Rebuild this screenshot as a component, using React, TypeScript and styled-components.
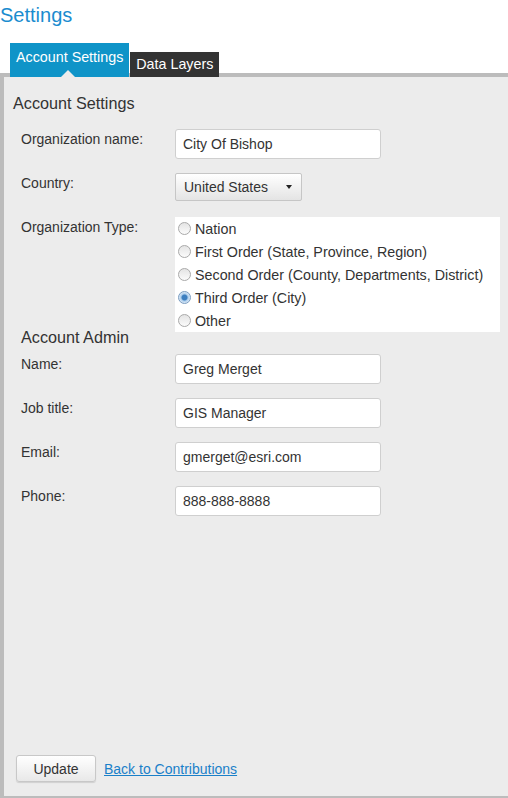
import React, { FC, useState } from "react";
import styled, { createGlobalStyle } from "styled-components";

const GlobalStyle = createGlobalStyle`
  html, body {
    margin: 0;
    padding: 0;
    background: #fff;
    font-family: "Liberation Sans", Arial, sans-serif;
    color: #333;
  }
`;

const Page = styled.div`
  width: 508px;
  height: 798px;
  display: flex;
  flex-direction: column;
  overflow: hidden;
`;

const Title = styled.h1`
  margin: 0;
  padding: 3px 0 0 0;
  height: 43px;
  box-sizing: border-box;
  font-size: 20px;
  line-height: 24px;
  font-weight: 400;
  color: #1b8ccf;
`;

const TabBar = styled.div`
  height: 34px;
  display: flex;
  align-items: flex-end;
  padding-left: 10px;
  box-shadow: inset 0 -4px 0 #bcbcbc;
`;

const Tab = styled.div<{ active?: boolean }>`
  position: relative;
  height: ${(p) => (p.active ? "34px" : "25px")};
  padding: ${(p) => (p.active ? "6px 6px 0 6px" : "4px 6px 0 6px")};
  box-sizing: border-box;
  margin-right: 1px;
  background: ${(p) => (p.active ? "#0f94c8" : "#333")};
  color: #fff;
  font-size: 14.3px;
  line-height: 16px;
  white-space: nowrap;
  &::after {
    content: "";
    display: ${(p) => (p.active ? "block" : "none")};
    position: absolute;
    left: 51px;
    bottom: 0;
    border-left: 7px solid transparent;
    border-right: 7px solid transparent;
    border-bottom: 7px solid #ececec;
  }
`;

const Panel = styled.div`
  flex: 1;
  display: flex;
  flex-direction: column;
  background: #ececec;
  border-left: 4px solid #bcbcbc;
  border-bottom: 2px solid #bcbcbc;
  padding: 16px 0 14px 0;
`;

const SectionTitle = styled.h2<{ indent?: number; pull?: number }>`
  margin: ${(p) => (p.pull ? `-${p.pull}px` : "0")} 0 0 ${(p) => p.indent ?? 9}px;
  font-size: 16.2px;
  line-height: 20px;
  font-weight: 400;
  color: #333;
`;

const Form = styled.div<{ top: number }>`
  display: flex;
  flex-direction: column;
  gap: 14px;
  margin-top: ${(p) => p.top}px;
  padding-left: 17px;
`;

const Row = styled.div<{ top?: number }>`
  display: grid;
  grid-template-columns: 154px 1fr;
  align-items: start;
  margin-top: ${(p) => p.top ?? 0}px;
`;

const Label = styled.label`
  padding-top: 2px;
  font-size: 14px;
  line-height: 16px;
  color: #333;
`;

const TextInput = styled.input`
  width: 206px;
  height: 30px;
  box-sizing: border-box;
  border: 1px solid #cfcfcf;
  border-radius: 3px;
  background: #fff;
  padding: 0 7px;
  font-family: "Liberation Sans", Arial, sans-serif;
  font-size: 14px;
  color: #333;
  outline: none;
`;

const Select = styled.div`
  width: 127px;
  height: 28px;
  box-sizing: border-box;
  display: flex;
  align-items: center;
  justify-content: space-between;
  padding: 0 9px 0 8px;
  border: 1px solid #c6c6c6;
  border-radius: 2px;
  background: linear-gradient(#ffffff, #e4e4e4);
  font-size: 14px;
  color: #333;
`;

const Caret = styled.span`
  width: 0;
  height: 0;
  border-left: 3.5px solid transparent;
  border-right: 3.5px solid transparent;
  border-top: 4px solid #222;
`;

const RadioBox = styled.div`
  width: 325px;
  background: #fff;
  padding: 0 0 0 3px;
  box-sizing: border-box;
`;

const RadioItem = styled.label`
  display: flex;
  align-items: center;
  gap: 4px;
  height: 23px;
  font-size: 14.3px;
  color: #333;
  cursor: pointer;
  white-space: nowrap;
`;

const RadioDot = styled.span<{ checked?: boolean }>`
  width: 13px;
  height: 13px;
  flex-shrink: 0;
  box-sizing: border-box;
  border-radius: 50%;
  border: 1px solid ${(p) => (p.checked ? "#7a9cc0" : "#a9a9a9")};
  background: ${(p) =>
    p.checked
      ? "radial-gradient(circle, #3d7fc0 0 2.5px, #a9cbeb 3.5px, #e6f0fa 6px)"
      : "linear-gradient(#e4e4e4, #fbfbfb)"};
`;

const Footer = styled.div`
  margin-top: auto;
  display: flex;
  align-items: center;
  gap: 8px;
  padding-left: 12px;
`;

const Button = styled.button`
  width: 80px;
  height: 27px;
  border: 1px solid #c8c8c8;
  border-radius: 3px;
  background: linear-gradient(#ffffff, #e8e8e8);
  box-shadow: 0 1px 1px rgba(0, 0, 0, 0.12);
  font-family: "Liberation Sans", Arial, sans-serif;
  font-size: 14px;
  color: #333;
`;

const Link = styled.a`
  font-size: 14px;
  color: #1a80c9;
  text-decoration: underline;
  cursor: pointer;
`;

const orgTypes = [
  "Nation",
  "First Order (State, Province, Region)",
  "Second Order (County, Departments, District)",
  "Third Order (City)",
  "Other",
];

const admin = [
  { label: "Name:", value: "Greg Merget" },
  { label: "Job title:", value: "GIS Manager" },
  { label: "Email:", value: "gmerget@esri.com" },
  { label: "Phone:", value: "888-888-8888" },
];

const App: FC = () => {
  const [orgType, setOrgType] = useState(3);

  return (
    <Page>
      <GlobalStyle />
      <Title>Settings</Title>
      <TabBar>
        <Tab active>Account Settings</Tab>
        <Tab>Data Layers</Tab>
      </TabBar>
      <Panel>
        <SectionTitle>Account Settings</SectionTitle>
        <Form top={16}>
          <Row>
            <Label>Organization name:</Label>
            <TextInput defaultValue="City Of Bishop" />
          </Row>
          <Row>
            <Label>Country:</Label>
            <Select>
              United States
              <Caret />
            </Select>
          </Row>
          <Row top={2}>
            <Label>Organization Type:</Label>
            <RadioBox>
              {orgTypes.map((t, i) => (
                <RadioItem key={t} onClick={() => setOrgType(i)}>
                  <RadioDot checked={orgType === i} />
                  {t}
                </RadioItem>
              ))}
            </RadioBox>
          </Row>
        </Form>
        <SectionTitle indent={17} pull={5}>
          Account Admin
        </SectionTitle>
        <Form top={7}>
          {admin.map((a) => (
            <Row key={a.label}>
              <Label>{a.label}</Label>
              <TextInput defaultValue={a.value} />
            </Row>
          ))}
        </Form>
        <Footer>
          <Button>Update</Button>
          <Link>Back to Contributions</Link>
        </Footer>
      </Panel>
    </Page>
  );
};

export default App;
